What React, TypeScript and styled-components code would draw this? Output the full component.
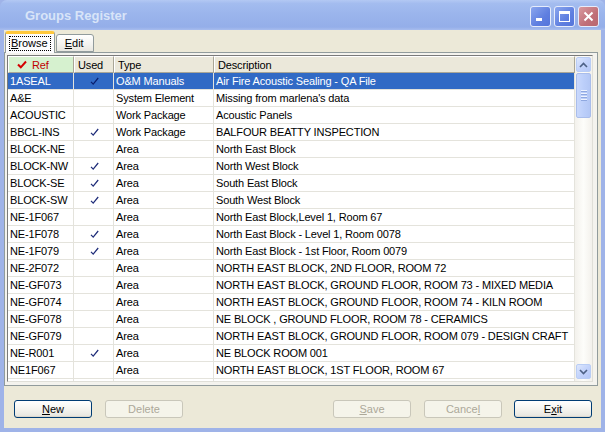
import React from "react";
import styled, { createGlobalStyle } from "styled-components";

const GlobalStyle = createGlobalStyle`
  html, body { margin: 0; padding: 0; width: 605px; height: 432px; overflow: hidden; }
  body { font-family: "Liberation Sans", Arial, sans-serif; font-size: 11px; color: #000; }
  * { box-sizing: border-box; }
`;

const Window = styled.div`
  width: 605px;
  height: 432px;
  display: flex;
  flex-direction: column;
  background: #9fb3e8;
`;

const TitleBar = styled.div`
  height: 30px;
  flex: 0 0 30px;
  display: flex;
  align-items: center;
  padding: 0 6px 0 25px;
  background: linear-gradient(#b3c8f3 0%, #a3bcef 12%, #9ab4ec 50%, #94aee9 90%, #a8bdee 100%);
  border-radius: 7px 7px 0 0;
`;

const Title = styled.div`
  flex: 1;
  font-family: "Liberation Sans", Arial, sans-serif;
  font-weight: bold;
  font-size: 13px;
  color: #d8e4f8;
  padding-top: 1px;
`;

const CaptionButtons = styled.div`
  display: flex;
  gap: 3px;
  padding-top: 2px;
`;

const CaptionButton = styled.div<{ $close?: boolean }>`
  width: 21px;
  height: 21px;
  border-radius: 3px;
  border: 1px solid #e6ecfb;
  background: ${(p) =>
    p.$close
      ? "linear-gradient(135deg, #d99a9f, #c06f78 60%, #b96670)"
      : "linear-gradient(135deg, #8aa6ee, #5f7fe0 60%, #5575db)"};
  display: flex;
  align-items: center;
  justify-content: center;
`;

const Frame = styled.div`
  flex: 1;
  display: flex;
  padding: 0 4px 4px 4px;
`;

const Body = styled.div`
  flex: 1;
  background: #ece9d8;
  display: flex;
  flex-direction: column;
  padding: 1px 3px 10px 0;
`;

const TabStrip = styled.div`
  display: flex;
  align-items: flex-end;
  height: 21px;
  padding-left: 1px;
  position: relative;
  z-index: 1;
`;

const Tab = styled.div<{ $active?: boolean }>`
  height: ${(p) => (p.$active ? "22px" : "18px")};
  margin-bottom: ${(p) => (p.$active ? "-1px" : "0")};
  padding: 0 4px;
  display: flex;
  align-items: center;
  border: 1px solid #919b9c;
  border-bottom: ${(p) => (p.$active ? "none" : "1px solid #919b9c")};
  border-top: ${(p) => (p.$active ? "3px solid #ffc83c" : "1px solid #919b9c")};
  border-radius: 3px 3px 0 0;
  background: ${(p) => (p.$active ? "#fcfcfe" : "linear-gradient(#ffffff, #f3f3ef 60%, #e8e7e0)")};
  margin-left: ${(p) => (p.$active ? "0" : "1px")};
  font-size: 11px;
`;

const TabLabel = styled.span<{ $focus?: boolean }>`
  line-height: 13px;
  outline: ${(p) => (p.$focus ? "1px dotted #000" : "none")};
  padding-left: ${(p) => (p.$focus ? "1px" : "4px")};
  padding-right: ${(p) => (p.$focus ? "2px" : "5px")};
`;

const TabPanel = styled.div`
  height: 334px;
  flex: 0 0 334px;
  border: 1px solid #919b9c;
  background: #f4f3ee;
  padding: 2px 4px 3px 2px;
  display: flex;
`;

const GridBox = styled.div`
  flex: 1;
  display: flex;
  border: 1px solid #7a7a7a;
  border-right-color: #e0dfd8;
  border-bottom-color: #e0dfd8;
  background: #fff;
  overflow: hidden;
`;

const Table = styled.div`
  flex: 1;
  display: flex;
  flex-direction: column;
  overflow: hidden;
  letter-spacing: -0.15px;
`;

const Row = styled.div<{ $selected?: boolean }>`
  display: grid;
  grid-template-columns: 66px 40px 100px 1fr;
  height: 17px;
  flex: 0 0 17px;
  background: ${(p) => (p.$selected ? "#316ac5" : "#fff")};
  color: ${(p) => (p.$selected ? "#fff" : "#000")};
`;

const HeaderRow = styled(Row)`
  background: #ece9d8;
`;

const HeadCell = styled.div<{ $ref?: boolean }>`
  display: flex;
  align-items: center;
  gap: 5px;
  padding-left: ${(p) => (p.$ref ? "8px" : "3px")};
  background: ${(p) => (p.$ref ? "#d6f1cf" : "#ebe8da")};
  color: ${(p) => (p.$ref ? "#c00000" : "#000")};
  border-top: 1px solid #fff;
  border-left: 1px solid #fff;
  border-right: 1px solid #a9a697;
  border-bottom: 1px solid #a9a697;
  white-space: nowrap;
`;

const Cell = styled.div<{ $center?: boolean }>`
  display: flex;
  align-items: center;
  justify-content: ${(p) => (p.$center ? "center" : "flex-start")};
  padding-left: 2px;
  border-right: 1px solid #e4e3dc;
  border-bottom: 1px solid #e4e3dc;
  white-space: nowrap;
  overflow: hidden;
`;

const ScrollBar = styled.div`
  width: 17px;
  flex: 0 0 17px;
  display: flex;
  flex-direction: column;
  background: linear-gradient(90deg, #f3f1ec, #fdfdfa 50%, #f3f1ec);
  padding: 1px 0 2px 1px;
`;

const ScrollButton = styled.div`
  width: 15px;
  height: 15px;
  flex: 0 0 15px;
  border: 1px solid #b9cdf5;
  border-radius: 2px;
  background: linear-gradient(135deg, #dde7fd, #c3d3fb 50%, #b5c8f7);
  display: flex;
  align-items: center;
  justify-content: center;
`;

const Thumb = styled.div`
  width: 15px;
  height: 45px;
  margin-top: 1px;
  border: 1px solid #a9bdeb;
  border-radius: 2px;
  background: linear-gradient(90deg, #c9d8fc, #bccffa 50%, #b3c7f5);
  display: flex;
  flex-direction: column;
  align-items: center;
  justify-content: center;
  gap: 1px;
`;

const Grip = styled.div`
  width: 6px;
  height: 1px;
  background: #eef3fe;
  box-shadow: 0 1px 0 #8fa8e0;
  margin-bottom: 1px;
`;

const Track = styled.div`
  flex: 1;
`;

const ButtonRow = styled.div`
  display: flex;
  margin-top: 14px;
  padding: 0 6px 0 10px;
`;

const Button = styled.div<{ $disabled?: boolean; $gap?: number }>`
  width: 78px;
  height: 18px;
  margin-left: ${(p) => p.$gap ?? 0}px;
  border: 1px solid ${(p) => (p.$disabled ? "#c9c7ba" : "#003c74")};
  border-radius: 3px;
  background: ${(p) =>
    p.$disabled ? "#f5f4ea" : "linear-gradient(#ffffff, #f5f4ef 50%, #e9e8e2 90%, #d6d0c5)"};
  color: ${(p) => (p.$disabled ? "#aca899" : "#000")};
  display: flex;
  align-items: center;
  justify-content: center;
  font-size: 11px;
  line-height: 13px;
`;

const Spacer = styled.div`
  flex: 1;
`;

const U = styled.span`
  text-decoration: underline;
`;

const Check = ({ color }: { color: string }) => (
  <svg width="9" height="9" viewBox="0 0 9 9">
    <path d="M1 4.8 L3.2 7.2 L8.2 1" fill="none" stroke={color} strokeWidth="1.2" />
  </svg>
);

const RedCheck = () => (
  <svg width="10" height="9" viewBox="0 0 10 9">
    <path d="M1 4.5 L3.8 7.3 L9 1.5" fill="none" stroke="#d40000" strokeWidth="2" />
  </svg>
);

type Item = { ref: string; used: boolean; type: string; desc: string };

const rows: Item[] = [
  { ref: "1ASEAL", used: true, type: "O&M Manuals", desc: "Air Fire Acoustic Sealing - QA File" },
  { ref: "A&E", used: false, type: "System Element", desc: "Missing from marlena's data" },
  { ref: "ACOUSTIC", used: false, type: "Work Package", desc: "Acoustic Panels" },
  { ref: "BBCL-INS", used: true, type: "Work Package", desc: "BALFOUR BEATTY INSPECTION" },
  { ref: "BLOCK-NE", used: false, type: "Area", desc: "North East Block" },
  { ref: "BLOCK-NW", used: true, type: "Area", desc: "North West Block" },
  { ref: "BLOCK-SE", used: true, type: "Area", desc: "South East Block" },
  { ref: "BLOCK-SW", used: true, type: "Area", desc: "South West Block" },
  { ref: "NE-1F067", used: false, type: "Area", desc: "North East Block,Level 1, Room 67" },
  { ref: "NE-1F078", used: true, type: "Area", desc: "North East Block - Level 1, Room 0078" },
  { ref: "NE-1F079", used: true, type: "Area", desc: "North East Block - 1st Floor, Room 0079" },
  { ref: "NE-2F072", used: false, type: "Area", desc: "NORTH EAST BLOCK, 2ND FLOOR, ROOM 72" },
  { ref: "NE-GF073", used: false, type: "Area", desc: "NORTH EAST BLOCK, GROUND FLOOR, ROOM 73 - MIXED MEDIA" },
  { ref: "NE-GF074", used: false, type: "Area", desc: "NORTH  EAST BLOCK, GROUND FLOOR, ROOM 74 - KILN ROOM" },
  { ref: "NE-GF078", used: false, type: "Area", desc: "NE BLOCK , GROUND FLOOR, ROOM 78 - CERAMICS" },
  { ref: "NE-GF079", used: false, type: "Area", desc: "NORTH EAST BLOCK, GROUND FLOOR, ROOM 079 - DESIGN CRAFT" },
  { ref: "NE-R001", used: true, type: "Area", desc: "NE BLOCK ROOM 001" },
  { ref: "NE1F067", used: false, type: "Area", desc: "NORTH EAST BLOCK, 1ST FLOOR, ROOM 67" },
];

export default function App() {
  return (
    <>
      <GlobalStyle />
      <Window>
        <TitleBar>
          <Title>Groups Register</Title>
          <CaptionButtons>
            <CaptionButton>
              <svg width="13" height="13" viewBox="0 0 13 13">
                <rect x="2" y="8" width="6" height="3" fill="#fff" />
              </svg>
            </CaptionButton>
            <CaptionButton>
              <svg width="13" height="13" viewBox="0 0 13 13">
                <rect x="1.5" y="1.5" width="10" height="10" fill="none" stroke="#fff" strokeWidth="1" />
                <rect x="1" y="1" width="11" height="3" fill="#fff" />
              </svg>
            </CaptionButton>
            <CaptionButton $close>
              <svg width="13" height="13" viewBox="0 0 13 13">
                <path d="M2.5 2.5 L10.5 10.5 M10.5 2.5 L2.5 10.5" stroke="#fff" strokeWidth="2" />
              </svg>
            </CaptionButton>
          </CaptionButtons>
        </TitleBar>
        <Frame>
          <Body>
            <TabStrip>
              <Tab $active>
                <TabLabel $focus>
                  <U>B</U>rowse
                </TabLabel>
              </Tab>
              <Tab>
                <TabLabel>
                  <U>E</U>dit
                </TabLabel>
              </Tab>
            </TabStrip>
            <TabPanel>
              <GridBox>
                <Table>
                  <HeaderRow>
                    <HeadCell $ref>
                      <RedCheck />
                      Ref
                    </HeadCell>
                    <HeadCell>Used</HeadCell>
                    <HeadCell>Type</HeadCell>
                    <HeadCell>Description</HeadCell>
                  </HeaderRow>
                  {rows.map((r, i) => (
                    <Row key={r.ref} $selected={i === 0}>
                      <Cell>{r.ref}</Cell>
                      <Cell $center>{r.used && <Check color={i === 0 ? "#0a1f6e" : "#1d2b78"} />}</Cell>
                      <Cell>{r.type}</Cell>
                      <Cell>{r.desc}</Cell>
                    </Row>
                  ))}
                  <Row>
                    <Cell />
                    <Cell />
                    <Cell />
                    <Cell />
                  </Row>
                </Table>
                <ScrollBar>
                  <ScrollButton>
                    <svg width="9" height="6" viewBox="0 0 9 6">
                      <path d="M1 5 L4.5 1.5 L8 5" fill="none" stroke="#4d6185" strokeWidth="1.6" />
                    </svg>
                  </ScrollButton>
                  <Thumb>
                    <Grip />
                    <Grip />
                    <Grip />
                    <Grip />
                  </Thumb>
                  <Track />
                  <ScrollButton>
                    <svg width="9" height="6" viewBox="0 0 9 6">
                      <path d="M1 1 L4.5 4.5 L8 1" fill="none" stroke="#4d6185" strokeWidth="1.6" />
                    </svg>
                  </ScrollButton>
                </ScrollBar>
              </GridBox>
            </TabPanel>
            <ButtonRow>
              <Button>
                <span>
                  <U>N</U>ew
                </span>
              </Button>
              <Button $disabled $gap={13}>
                <span>Delete</span>
              </Button>
              <Spacer />
              <Button $disabled>
                <span>
                  <U>S</U>ave
                </span>
              </Button>
              <Button $disabled $gap={13}>
                <span>
                  Cance<U>l</U>
                </span>
              </Button>
              <Button $gap={12}>
                <span>
                  E<U>x</U>it
                </span>
              </Button>
            </ButtonRow>
          </Body>
        </Frame>
      </Window>
    </>
  );
}
